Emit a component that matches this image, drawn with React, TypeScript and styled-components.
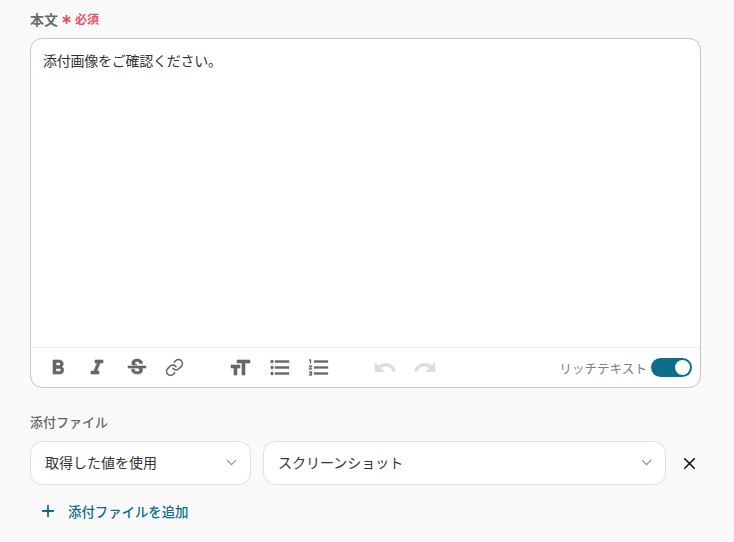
import styled, { createGlobalStyle } from "styled-components";
import {
  MdFormatBold,
  MdFormatItalic,
  MdStrikethroughS,
  MdFormatSize,
  MdFormatListBulleted,
  MdFormatListNumbered,
  MdUndo,
  MdRedo,
} from "react-icons/md";
import { LuLink, LuPlus, LuX, LuChevronDown } from "react-icons/lu";

const GlobalStyle = createGlobalStyle`
  html, body {
    margin: 0;
    padding: 0;
    background: #fafafa;
  }
  body {
    font-family: "Noto Sans CJK JP", "Noto Sans", sans-serif;
    overflow: hidden;
  }
`;

const Page = styled.div`
  width: 734px;
  height: 542px;
  box-sizing: border-box;
  padding: 9px 33px 0 30px;
  background: #fafafa;
`;

const Label = styled.div`
  display: flex;
  align-items: center;
  height: 19px;
  gap: 4px;
  font-size: 14px;
  font-weight: 700;
  color: #6b6b6b;
`;

const Star = styled.svg`
  width: 9px;
  height: 9px;
  flex: none;
  margin-top: 2px;
  stroke: #f04e63;
  stroke-width: 2;
`;

const Required = styled.span`
  color: #f04e63;
  font-size: 12px;
  font-weight: 700;
`;

const Editor = styled.div`
  margin-top: 10px;
  height: 350px;
  box-sizing: border-box;
  display: flex;
  flex-direction: column;
  background: #fff;
  border: 1px solid #c6c6c6;
  border-radius: 12px;
`;

const Body = styled.div`
  flex: 1;
  padding: 10px 12px;
  font-size: 14px;
  letter-spacing: -0.25px;
  line-height: 22px;
  color: #333;
`;

const Toolbar = styled.div`
  height: 40px;
  box-sizing: border-box;
  display: flex;
  align-items: center;
  padding: 0 8px 0 14.5px;
  border-top: 1px solid #eeeeee;
`;

const ToolGroup = styled.div<{ $width: number }>`
  display: flex;
  align-items: center;
  gap: 15.5px;
  width: ${(p) => p.$width}px;
  flex: none;
`;

const Tool = styled.span<{ $off?: boolean; $size?: number; $weight?: number }>`
  display: flex;
  width: 24px;
  height: 24px;
  align-items: center;
  justify-content: center;
  font-size: ${(p) => p.$size ?? 24}px;
  color: ${(p) => (p.$off ? "#dcdcdc" : "#666")};
  svg path:not([fill="none"]) {
    stroke: currentColor;
    stroke-width: ${(p) => p.$weight ?? 0.6};
  }
`;

const LinkTool = styled(Tool)`
  svg {
    margin-left: -3px;
  }
`;

const RichToggle = styled.div`
  margin-left: auto;
  display: flex;
  align-items: center;
  gap: 4px;
  font-size: 12.6px;
  color: #808080;
`;

const Switch = styled.div`
  width: 41px;
  height: 19px;
  box-sizing: border-box;
  padding: 2px;
  display: flex;
  justify-content: flex-end;
  border-radius: 10px;
  background: #0e6d8c;
`;

const Knob = styled.div`
  width: 15px;
  height: 15px;
  border-radius: 50%;
  background: #fff;
`;

const FileLabel = styled(Label)`
  margin-top: 25px;
  padding-bottom: 2px;
  box-sizing: border-box;
  font-size: 13px;
  font-weight: 500;
  color: #666;
`;

const SelectRow = styled.div`
  display: flex;
  align-items: center;
  margin-top: 9px;
`;

const Select = styled.div<{ $width: number }>`
  width: ${(p) => p.$width}px;
  height: 44px;
  box-sizing: border-box;
  display: flex;
  align-items: center;
  justify-content: space-between;
  margin-right: 12px;
  padding: 0 10px 2px 14px;
  font-size: 14px;
  color: #333;
  background: #fff;
  border: 1px solid #dfe0e4;
  border-radius: 12px;
  svg {
    font-size: 17px;
    color: #888;
    stroke-width: 1.6;
  }
`;

const Remove = styled.span`
  display: flex;
  margin-left: 2px;
  font-size: 19px;
  color: #111;
`;

const AddButton = styled.div`
  display: flex;
  align-items: center;
  gap: 11px;
  margin: 16px 0 0 9px;
  font-size: 13.4px;
  font-weight: 500;
  color: #0e6d8c;
  svg {
    font-size: 18px;
    stroke-width: 2.4;
  }
`;

export default function App() {
  return (
    <Page>
      <GlobalStyle />
      <Label>
        本文
        <Star viewBox="0 0 10 10">
          <path d="M5 0v10M.7 2.5l8.6 5M9.3 2.5l-8.6 5" />
        </Star>
        <Required>必須</Required>
      </Label>
      <Editor>
        <Body>添付画像をご確認ください。</Body>
        <Toolbar>
          <ToolGroup $width={182.5}>
            <Tool><MdFormatBold /></Tool>
            <Tool><MdFormatItalic /></Tool>
            <Tool><MdStrikethroughS /></Tool>
            <LinkTool $size={19} $weight={2}><LuLink /></LinkTool>
          </ToolGroup>
          <ToolGroup $width={145}>
            <Tool><MdFormatSize /></Tool>
            <Tool $size={25} $weight={0.4}><MdFormatListBulleted /></Tool>
            <Tool $size={25} $weight={0.3}><MdFormatListNumbered /></Tool>
          </ToolGroup>
          <ToolGroup $width={64}>
            <Tool $off $size={25} $weight={0.8}><MdUndo /></Tool>
            <Tool $off $size={25} $weight={0.8}><MdRedo /></Tool>
          </ToolGroup>
          <RichToggle>
            リッチテキスト
            <Switch><Knob /></Switch>
          </RichToggle>
        </Toolbar>
      </Editor>
      <FileLabel>添付ファイル</FileLabel>
      <SelectRow>
        <Select $width={221}>取得した値を使用<LuChevronDown /></Select>
        <Select $width={403}>スクリーンショット<LuChevronDown /></Select>
        <Remove><LuX /></Remove>
      </SelectRow>
      <AddButton><LuPlus />添付ファイルを追加</AddButton>
    </Page>
  );
}
